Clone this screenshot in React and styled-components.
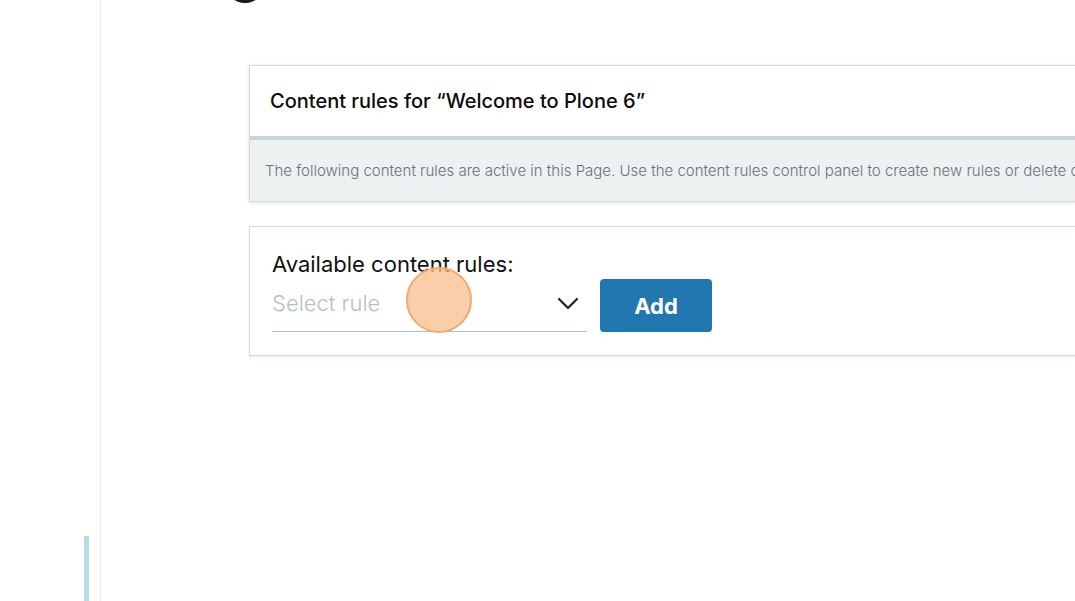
import React from "react";
import styled, { createGlobalStyle } from "styled-components";

const GlobalStyle = createGlobalStyle`
  html, body {
    margin: 0;
    padding: 0;
    background: #fff;
    font-family: Inter, "Liberation Sans", sans-serif;
    overflow: hidden;
  }
`;

export default function App() {
  return (
    <Page>
      <GlobalStyle />
      <Sidebar>
        <SideMarker />
      </Sidebar>
      <Main>
        <TopIcon>
          <svg width="40" height="40" viewBox="0 0 40 40">
            <circle cx="20" cy="20" r="20" fill="#0c1a24" />
          </svg>
        </TopIcon>
        <Card>
          <CardHeader>Content rules for “Welcome to Plone 6”</CardHeader>
          <CardInfo>
            The following content rules are active in this Page. Use the content
            rules control panel to create new rules or delete or modify existing
            ones.
          </CardInfo>
        </Card>
        <FormCard>
          <Label>Available content rules:</Label>
          <Row>
            <SelectBox>
              <Placeholder>Select rule</Placeholder>
              <svg width="24" height="24" viewBox="0 0 24 24" fill="none">
                <path
                  d="M3 8l9 9 9-9"
                  stroke="#222"
                  strokeWidth="2.2"
                  strokeLinecap="round"
                  strokeLinejoin="round"
                />
              </svg>
            </SelectBox>
            <AddButton type="button">Add</AddButton>
            <Cursor />
          </Row>
        </FormCard>
      </Main>
    </Page>
  );
}

const Page = styled.div`
  display: flex;
  width: 1075px;
  height: 601px;
  overflow: hidden;
`;

const Sidebar = styled.aside`
  flex: 0 0 101px;
  box-sizing: border-box;
  border-right: 1px solid #ececec;
  display: flex;
  flex-direction: column;
  justify-content: flex-end;
  align-items: flex-end;
  padding-right: 11px;
`;

const SideMarker = styled.div`
  width: 5px;
  height: 65px;
  background: #b7dbe8;
`;

const Main = styled.main`
  flex: 1;
  padding-left: 148px;
  position: relative;
  min-width: 0;
`;

const TopIcon = styled.div`
  margin: -37px 0 0 -24px;
  height: 40px;
  line-height: 0;
`;

const Card = styled.section`
  margin-top: 62px;
  width: 900px;
  border: 1px solid #d4d9db;
  box-shadow: 0 1px 4px rgba(0, 0, 0, 0.12);
  background: #fff;
`;

const CardHeader = styled.header`
  height: 70px;
  display: flex;
  align-items: center;
  padding-left: 20px;
  font-size: 20px;
  font-weight: 500;
  color: #0b0b0b;
  border-bottom: 4px solid #c7d3d8;
`;

const CardInfo = styled.div`
  background: #edf1f2;
  height: 61px;
  padding-left: 15px;
  display: flex;
  align-items: center;
  font-size: 15px;
  font-weight: 300;
  color: #65747c;
  white-space: nowrap;
  overflow: hidden;
`;

const FormCard = styled.section`
  margin-top: 24px;
  width: 900px;
  height: 130px;
  box-sizing: border-box;
  border: 1px solid #cfdcdd;
  box-shadow: 0 1px 2px rgba(0, 0, 0, 0.08);
  padding: 22px 22px 0;
`;

const Label = styled.div`
  font-size: 22px;
  color: #111;
  line-height: 30px;
`;

const Row = styled.div`
  display: flex;
  align-items: flex-end;
  gap: 13px;
  position: relative;
`;

const SelectBox = styled.div`
  width: 315px;
  height: 53px;
  box-sizing: border-box;
  border-bottom: 1px solid #a9c1c4;
  display: flex;
  align-items: center;
  justify-content: space-between;
  padding-right: 7px;
  padding-bottom: 4px;
`;

const Placeholder = styled.span`
  font-size: 22px;
  font-weight: 300;
  color: #b3c1c3;
`;

const AddButton = styled.button`
  width: 112px;
  height: 53px;
  border: 0;
  border-radius: 4px;
  background: #2178b0;
  color: #fff;
  font-family: Inter, "Liberation Sans", sans-serif;
  font-size: 22px;
  font-weight: 700;
`;

const Cursor = styled.div`
  position: absolute;
  left: 134px;
  top: -12px;
  width: 62px;
  height: 62px;
  border-radius: 50%;
  background: rgba(248, 190, 140, 0.75);
  border: 2px solid #f0ab6c;
`;
